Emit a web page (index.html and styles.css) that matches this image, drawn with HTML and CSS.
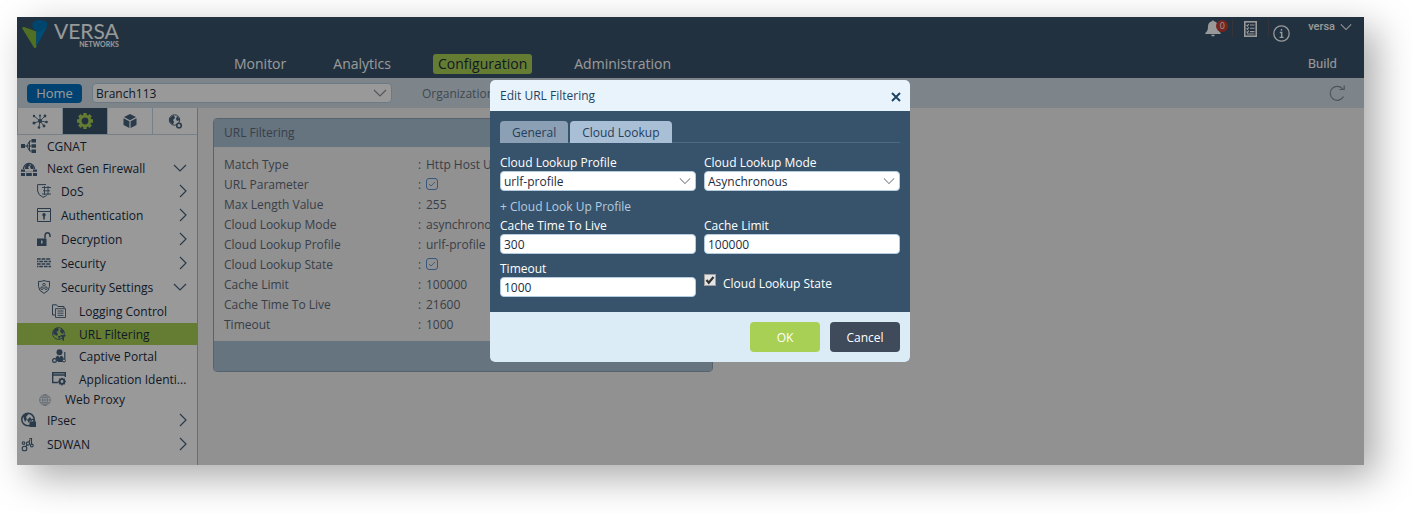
FILE: index.html
```html
<!DOCTYPE html>
<html lang="en">
<head>
  <meta charset="utf-8">
  <title>Versa Director</title>
  <link rel="stylesheet" href="styles.css">
</head>
<body>
  <svg class="symbols" width="0" height="0">
    <symbol id="down" viewBox="0 0 14 8"><path d="M1 1l6 6 6-6" fill="none" stroke="currentColor" stroke-width="1.2"/></symbol>
    <symbol id="right" viewBox="0 0 8 14"><path d="M1 1l6 6-6 6" fill="none" stroke="currentColor" stroke-width="1.2"/></symbol>
    <symbol id="ticked" viewBox="0 0 12 12"><rect x=".5" y=".5" width="11" height="11" rx="2.5" fill="none" stroke="currentColor"/><path d="M3 6l2 2 4-4" fill="none" stroke="currentColor" stroke-width=".9"/></symbol>
  </svg>

  <div class="app">
    <header class="header">
      <div class="header-top">
        <a class="logo" href="#">
          <svg width="26" height="28" viewBox="0 0 26 28">
            <path d="M.3 8.6Q-.2 6.800 2 7l12.500 4.500V27l-1.200 1h-1z" fill="#86b93a"/>
            <path d="M10.500 3.200Q12 .3 15.500.1q6-.4 8.800 1.500 1.700 1.600.7 5.100L14.500 26V11.500Q9.500 8.500 10.500 3.200z" fill="#0074b4"/>
            <path d="M25 6.700L14.500 26V11.500Q18 13 25 6.700z" fill="#0080c4"/>
          </svg>
          <span class="logo-text"><span>VERSA</span><small>NETWORKS</small></span>
        </a>
        <div class="tools">
          <button class="tool bell" aria-label="Alarms">
            <svg width="16" height="17" viewBox="0 0 16 17"><path d="M8 0l1 1.300c3 .6 4 2.700 4 5.200 0 3.500.8 5 2.700 6.500v1H.3v-1C2.200 11.500 3 10 3 6.500c0-2.500 1-4.600 4-5.200zM6 14.800h4Q9.500 16.600 8 16.600T6 14.800z" fill="currentColor"/></svg>
            <span class="badge">0</span>
          </button>
          <button class="tool tasks" aria-label="Tasks">
            <svg width="13" height="16" viewBox="0 0 13 16"><rect x=".8" y=".8" width="11.400" height="14.400" fill="none" stroke="currentColor" stroke-width="1.600"/><path d="M2.500 4l1 1 1.200-2M2.500 7.300l1 1 1.200-2M2.500 10.600l1 1 1.200-2M6 4h4.500M6 7.300h4.500M6 10.600h4.500M3 13h7.500" fill="none" stroke="currentColor" stroke-width="1.100"/></svg>
          </button>
          <button class="tool info" aria-label="About">
            <svg width="17" height="17" viewBox="0 0 17 17"><circle cx="8.500" cy="8.500" r="7.700" fill="none" stroke="currentColor" stroke-width="1.300"/><path d="M8.500 4v1.700M6.800 7.500h1.900v4.700M6.600 12.400h4" fill="none" stroke="currentColor" stroke-width="1.400"/></svg>
          </button>
          <button class="user">versa <svg width="12" height="8"><use href="#down"/></svg></button>
        </div>
      </div>
      <div class="header-nav">
        <nav class="nav">
          <a href="#">Monitor</a>
          <a href="#">Analytics</a>
          <a class="active" href="#">Configuration</a>
          <a href="#">Administration</a>
        </nav>
        <a class="build" href="#">Build</a>
      </div>
    </header>

    <div class="subbar">
      <button class="home">Home</button>
      <div class="select device">
        <select aria-label="Device"><option>Branch113</option></select>
        <svg width="14" height="8"><use href="#down"/></svg>
      </div>
      <span class="org">Organization</span>
      <button class="refresh" aria-label="Refresh">
        <svg width="17" height="16" viewBox="0 0 17 16"><path d="M14.500 11.500A7 7 0 1 1 13.800 4M10.500 4.500h4.700V.5" fill="none" stroke="currentColor" stroke-width="1.200"/></svg>
      </button>
    </div>

    <div class="content">
      <aside class="sidebar">
        <div class="side-tabs">
          <button aria-label="Networking">
            <svg width="16" height="16" viewBox="0 0 16 16"><circle cx="8" cy="8" r="2" fill="currentColor"/><path d="M8 8L2 3M8 8l5-5M8 8l6 1M8 8l4 5M8 8l-1 6M8 8l-6 2M8 8V3" stroke="currentColor" stroke-width=".9"/><g fill="currentColor"><circle cx="2" cy="3" r="1.200"/><circle cx="13" cy="3" r="1.400"/><circle cx="14.500" cy="9" r="1.300"/><circle cx="12" cy="13" r="1.400"/><circle cx="7" cy="14.500" r="1.300"/><circle cx="2" cy="10" r="1.500"/><circle cx="8" cy="2.500" r="1"/></g></svg>
          </button>
          <button class="active" aria-label="Services">
            <svg width="16" height="16" viewBox="0 0 16 16"><circle cx="8" cy="8" r="4.800" fill="none" stroke="currentColor" stroke-width="2.800"/><path d="M8 0v3M8 13v3M0 8h3M13 8h3M2.300 2.300l2 2M11.700 11.700l2 2M2.300 13.700l2-2M11.700 4.300l2-2" stroke="currentColor" stroke-width="3.400"/></svg>
          </button>
          <button aria-label="Objects">
            <svg width="14" height="15" viewBox="0 0 14 15"><path d="M7 0l6 3-6 3.200L1 3zM.5 4.200l5.900 3.100V14L.5 11zM13.500 4.200L7.600 7.300V14l5.900-3z" fill="currentColor"/></svg>
          </button>
          <button aria-label="Others">
            <svg width="15" height="15" viewBox="0 0 15 15"><circle cx="6.500" cy="6" r="5.200" fill="none" stroke="currentColor"/><path d="M2 4q2-3 4-2.500L7 4 5 6l1 2-1 2.500Q2 9 1.500 6zM9 2l3 4-3 1-1-2z" fill="currentColor"/><circle cx="11" cy="11.500" r="2.300" fill="#fff" stroke="currentColor" stroke-width="1.600"/></svg>
          </button>
        </div>
        <nav class="menu">
          <a class="level1 short" href="#"><svg width="16" height="14" viewBox="0 0 16 14"><path d="M0 5h4v4H0zM10.500 0H15v3.500h-4.500zM10.500 5.200H15v3.500h-4.500zM10.500 10.500H15V14h-4.500z" fill="currentColor"/><path d="M4 7h6.500M10.500 2H8.500v10h2M8 3L6 7l2 4" fill="none" stroke="currentColor"/></svg>CGNAT</a>
          <a class="level1 short" href="#"><svg width="16" height="16" viewBox="0 0 16 16"><path d="M2.500 9a5.500 5.500 0 1 1 11 0" fill="none" stroke="currentColor" stroke-width="1.300"/><path d="M4 8q0-4 4-4.500l1 2L7 7l1 2H4zM10 4q3 2 2.500 5H10L9 7z" fill="currentColor"/><path d="M0 9.500h4v2h8v-2h4v2.300H0zM0 13h4v3H0zM5.200 13h5.600v3H5.200zM12 13h4v3h-4z" fill="currentColor"/></svg>Next Gen Firewall<svg class="arrow" width="14" height="8"><use href="#down"/></svg></a>
          <a class="level2" href="#"><svg width="14" height="14" viewBox="0 0 14 14"><path d="M9 .6H.6V7Q1 11 6 13.300q3-1 4-2.500" fill="none" stroke="currentColor"/><path d="M5 3.500h9M6 6.800h7M5 10h9M7.500 2v9M11 2v9" stroke="currentColor" stroke-width=".9"/></svg>DoS<svg class="arrow" width="8" height="14"><use href="#right"/></svg></a>
          <a class="level2" href="#"><svg width="14" height="14" viewBox="0 0 14 14"><path d="M.5.500h13v13H.5zM.5 3.500h13" fill="none" stroke="currentColor"/><circle cx="7" cy="6.800" r="1.700" fill="currentColor"/><path d="M7 7v4.500" stroke="currentColor" stroke-width="1.600"/></svg>Authentication<svg class="arrow" width="8" height="14"><use href="#right"/></svg></a>
          <a class="level2" href="#"><svg width="14" height="14" viewBox="0 0 14 14"><path d="M0 6.500h9.500V14H0z" fill="currentColor"/><path d="M8 6.500V3.500q.3-2.700 2.500-2.700T13 3.500V5" fill="none" stroke="currentColor" stroke-width="1.500"/><path d="M4.800 8.500v3" stroke="#fff" stroke-width="1.500"/></svg>Decryption<svg class="arrow" width="8" height="14"><use href="#right"/></svg></a>
          <a class="level2" href="#"><svg width="14" height="10" viewBox="0 0 14 10"><path d="M0 1h14M0 6h14" stroke="currentColor" stroke-width="1.700" stroke-dasharray="3.700 .9"/><path d="M0 3.500h14M0 8.500h14" stroke="currentColor" stroke-width="1.700" stroke-dasharray="3.700 .9" stroke-dashoffset="2.300"/></svg>Security<svg class="arrow" width="8" height="14"><use href="#right"/></svg></a>
          <a class="level2" href="#"><svg width="14" height="14" viewBox="0 0 14 14"><path d="M7 .6q3 1.200 5.500.8v5q0 4.500-5.500 7-5.500-2.500-5.500-7v-5Q4 1.800 7 .6z" fill="none" stroke="currentColor"/><g fill="none" stroke="currentColor" stroke-width=".9"><circle cx="7" cy="4.700" r="1.300"/><circle cx="5" cy="8.200" r="1.300"/><circle cx="9" cy="8.200" r="1.300"/></g></svg>Security Settings<svg class="arrow" width="14" height="8"><use href="#down"/></svg></a>
          <a class="level3" href="#"><svg width="14" height="14" viewBox="0 0 14 14"><path d="M3 11H.5V.8h4L6 2.500h6V4.500" fill="none" stroke="currentColor"/><path d="M3.500 4.700h10v8.800h-10zM5.500 7h6M5.500 9.200h6M5.500 11.400h6" fill="none" stroke="currentColor" stroke-width=".9"/></svg>Logging Control</a>
          <a class="level3 short selected" href="#"><svg width="14" height="14" viewBox="0 0 14 14"><circle cx="6.500" cy="6.500" r="5.900" fill="none" stroke="currentColor"/><path d="M2 2.500Q4 .5 6 1l1 2-2.500 2L6 7 5 9 3 8 1 6.500zM9 1.500l3 3-1 2.500-2-1-1-2zM6 9h3l-2 3.500z" fill="currentColor"/><path d="M8 8h6l-2 2.500V14l-1.800-1v-2.500z" fill="currentColor"/></svg>URL Filtering</a>
          <a class="level3 short" href="#"><svg width="14" height="14" viewBox="0 0 14 14"><circle cx="7.500" cy="3.200" r="3" fill="currentColor"/><path d="M3.500 9Q4 7 6 6.500l1.500 2 1.500-2q2 .5 2.500 2.500v4H6z" fill="currentColor"/><circle cx="2.500" cy="11.500" r="1.900" fill="none" stroke="currentColor" stroke-width="1.200"/><path d="M4.500 11.500H8M12.800 3v7" stroke="currentColor" stroke-width="1.200"/><circle cx="12" cy="11.500" r="1.500" fill="#fff" stroke="currentColor"/></svg>Captive Portal</a>
          <a class="level3" href="#"><svg width="14" height="14" viewBox="0 0 14 14"><path d="M6.500 10.500H.7V.7h12.600V5M.7 3h12.600" fill="none" stroke="currentColor" stroke-width="1.400"/><circle cx="10" cy="9.500" r="2.300" fill="none" stroke="currentColor" stroke-width="1.800"/><path d="M10 5.700v1.500M10 12v1.500M6.200 9.500h1.500M12.400 9.500h1.500M7.300 6.800l1 1M11.700 11.200l1 1M12.700 6.800l-1 1M7.300 12.200l1-1" stroke="currentColor" stroke-width="1.400"/></svg><span>Application Identi...</span></a>
          <a class="proxy" href="#"><svg width="12" height="12" viewBox="0 0 12 12"><g fill="none" stroke="currentColor" stroke-width=".8"><circle cx="6" cy="6" r="5.400"/><ellipse cx="6" cy="6" rx="2.500" ry="5.400"/><path d="M6 .6v10.800M.6 6h10.800M1.300 3.300h9.400M1.300 8.700h9.400"/></g></svg>Web Proxy</a>
          <a class="level1" href="#"><svg width="16" height="16" viewBox="0 0 16 16"><circle cx="7" cy="7.500" r="6.200" fill="none" stroke="currentColor" stroke-width="1.500"/><path d="M2 4q3-3 6-2.500L5 5l1 2-2 3zM6 8l3-3 2 3H9l-1 3z" fill="currentColor"/><path d="M8.500 9.500H15V15H8.500z" fill="currentColor"/><path d="M10 9.500V8.300q1.700-2 3.500 0v1.200" fill="none" stroke="currentColor" stroke-width="1.200"/></svg>IPsec<svg class="arrow" width="8" height="14"><use href="#right"/></svg></a>
          <a class="level1" href="#"><svg width="16" height="16" viewBox="0 0 16 16"><g fill="none" stroke="currentColor" stroke-width="1.100"><circle cx="3.500" cy="12.500" r="2.300"/><circle cx="2.500" cy="7" r="1.300"/><circle cx="7" cy="7.500" r="1.600"/><circle cx="10.800" cy="9.500" r="1.400"/><path d="M4.700 10.500l1.500-1.600M8 6l1-2.500M8.500 2.500h2v5.600"/></g></svg>SDWAN<svg class="arrow" width="8" height="14"><use href="#right"/></svg></a>
        </nav>
      </aside>

      <main class="main">
        <section class="panel">
          <h2>URL Filtering</h2>
          <table>
            <tr><th scope="row">Match Type</th><td>:</td><td>Http Host URL</td></tr>
            <tr><th scope="row">URL Parameter</th><td>:</td><td><svg class="tick" width="12" height="12"><use href="#ticked"/></svg></td></tr>
            <tr><th scope="row">Max Length Value</th><td>:</td><td>255</td></tr>
            <tr><th scope="row">Cloud Lookup Mode</th><td>:</td><td>asynchronous</td></tr>
            <tr><th scope="row">Cloud Lookup Profile</th><td>:</td><td>urlf-profile</td></tr>
            <tr><th scope="row">Cloud Lookup State</th><td>:</td><td><svg class="tick" width="12" height="12"><use href="#ticked"/></svg></td></tr>
            <tr><th scope="row">Cache Limit</th><td>:</td><td>100000</td></tr>
            <tr><th scope="row">Cache Time To Live</th><td>:</td><td>21600</td></tr>
            <tr><th scope="row">Timeout</th><td>:</td><td>1000</td></tr>
          </table>
          <div class="panel-foot"></div>
        </section>
      </main>
    </div>

    <div class="overlay">
      <form class="dialog" role="dialog" aria-labelledby="dialog-title">
        <div class="dialog-head">
          <h2 id="dialog-title">Edit URL Filtering</h2>
          <button type="button" class="close" aria-label="Close">
            <svg width="10" height="10" viewBox="0 0 10 10"><path d="M1 1l8 8M9 1L1 9" stroke="currentColor" stroke-width="2"/></svg>
          </button>
        </div>
        <div class="dialog-body">
          <div class="tabs">
            <button type="button">General</button>
            <button type="button" class="active">Cloud Lookup</button>
          </div>
          <div class="fields">
            <div class="field">
              <label for="profile">Cloud Lookup Profile</label>
              <div class="select">
                <select id="profile"><option>urlf-profile</option></select>
                <svg width="12" height="8"><use href="#down"/></svg>
              </div>
            </div>
            <div class="field">
              <label for="mode">Cloud Lookup Mode</label>
              <div class="select">
                <select id="mode"><option>Asynchronous</option><option>Synchronous</option></select>
                <svg width="12" height="8"><use href="#down"/></svg>
              </div>
            </div>
            <a class="add" href="#">+ Cloud Look Up Profile</a>
            <div class="field">
              <label for="ttl">Cache Time To Live</label>
              <input id="ttl" type="text" value="300">
            </div>
            <div class="field">
              <label for="limit">Cache Limit</label>
              <input id="limit" type="text" value="100000">
            </div>
            <div class="field timeout">
              <label for="timeout">Timeout</label>
              <input id="timeout" type="text" value="1000">
            </div>
            <div class="check">
              <span class="box">
                <input id="state" type="checkbox" checked>
                <svg width="12" height="12" viewBox="0 0 12 12"><path d="M2.500 6l2.300 2.800L9.500 3" fill="none" stroke="#333" stroke-width="2.200"/></svg>
              </span>
              <label for="state">Cloud Lookup State</label>
            </div>
          </div>
        </div>
        <div class="dialog-foot">
          <button type="submit" class="ok">OK</button>
          <button type="button" class="cancel">Cancel</button>
        </div>
      </form>
    </div>
  </div>
</body>
</html>
```
FILE: styles.css
```css
* {
  box-sizing: border-box;
}
body {
  margin: 0;
  padding: 17px 48px 48px 17px;
  background: #fff;
  font-family: "Open Sans", "Noto Sans", sans-serif;
  font-size: 12px;
  color: #1c2c40;
}
a {
  color: inherit;
  text-decoration: none;
}
button {
  font: inherit;
  color: inherit;
  background: none;
  border: 0;
  padding: 0;
}
svg {
  display: block;
  flex: none;
}
h2 {
  margin: 0;
  font-size: 12px;
  font-weight: 400;
}
.symbols {
  position: absolute;
}
.app {
  position: relative;
  display: flex;
  flex-direction: column;
  min-height: calc(100vh - 65px);
  background: #f2f2f2;
  box-shadow: 12px 12px 36px rgba(0, 0, 0, 0.34);
}

/* header */
.header {
  background: #37536b;
  color: #fff;
  padding: 3px 12px 4px 5px;
}
.header-top {
  display: flex;
  justify-content: space-between;
  height: 34px;
}
.logo {
  display: flex;
  gap: 6px;
}
.logo-text {
  display: flex;
  flex-direction: column;
  align-items: flex-end;
  padding-top: 2px;
  font-family: Lato, sans-serif;
  font-size: 21px;
  line-height: 18px;
}
.logo-text small {
  font-size: 7px;
  font-weight: 700;
  line-height: 9px;
}
.tools {
  display: flex;
  align-items: flex-start;
}
.tool {
  padding: 0 11px;
  border-right: 1px solid #5a5560;
  height: 17px;
}
.bell {
  position: relative;
}
.badge {
  position: absolute;
  left: 22px;
  top: 0;
  width: 12px;
  height: 12px;
  border-radius: 6px;
  background: #c83c32;
  font-size: 9px;
  line-height: 12px;
  text-align: center;
}
.info {
  border: 0;
  height: 22px;
  padding: 5px 18px 0 4px;
}
.user {
  display: flex;
  align-items: center;
  gap: 5px;
  font-family: Roboto, sans-serif;
  font-size: 11px;
  font-weight: 500;
  line-height: 14px;
}
.header-nav {
  display: flex;
  justify-content: space-between;
  line-height: 20px;
}
.nav {
  display: flex;
  gap: 37px;
  margin-left: 207px;
  font-size: 14px;
}
.nav a {
  padding: 0 5px;
  border-radius: 3px;
}
.nav .active {
  background: #a8d054;
  color: #1c2c40;
}
.build {
  width: 44px;
  font-family: Roboto, sans-serif;
  font-size: 13px;
}

/* device bar */
.subbar {
  display: flex;
  align-items: center;
  height: 30px;
  padding: 0 18px 0 10px;
  background: #d0dee8;
}
.home {
  width: 55px;
  height: 19px;
  margin-right: 10px;
  border-radius: 4px;
  background: #006fbe;
  color: #fff;
  font-size: 13px;
  line-height: 18px;
}
.select {
  display: grid;
  align-items: center;
}
.select > * {
  grid-area: 1 / 1;
}
.select svg {
  justify-self: end;
  margin-right: 5px;
  color: #8a9096;
  pointer-events: none;
}
select,
input[type="text"] {
  appearance: none;
  width: 100%;
  height: 20px;
  margin: 0;
  padding: 0 3px;
  border: 1px solid #b4cce0;
  border-radius: 4px;
  background: #fff;
  color: #1c2c40;
  font: inherit;
}
.device {
  width: 300px;
}
.org {
  margin-left: 30px;
  color: #6b7886;
}
.refresh {
  margin-left: auto;
  color: #808a94;
}

/* sidebar */
.content {
  display: flex;
  flex: 1;
}
.sidebar {
  width: 181px;
  flex: none;
  border-right: 1px solid #b4b9be;
  background: #fff;
}
.side-tabs {
  display: flex;
  height: 27px;
  border-bottom: 1px solid #c4d6e4;
  color: #45627c;
}
.side-tabs button {
  display: flex;
  flex: 1;
  align-items: center;
  justify-content: center;
  border-left: 1px solid #c4d6e4;
}
.side-tabs .active {
  background: #37536b;
  color: #a8d054;
}
.menu a {
  display: flex;
  align-items: center;
  gap: 10px;
  height: 24px;
  padding-right: 10px;
  white-space: nowrap;
}
.menu svg {
  color: #45627c;
}
.menu .arrow {
  margin-left: auto;
}
.menu .level1 {
  padding-left: 4px;
}
.menu .level2 {
  padding-left: 20px;
}
.menu .level3 {
  gap: 13px;
  padding-left: 35px;
}
.menu .short {
  height: 22px;
}
.menu .selected {
  background: #a8d054;
}
.menu .proxy {
  gap: 14px;
  height: 17px;
  padding-left: 22px;
}
.proxy svg {
  opacity: 0.5;
}

/* settings panel */
.main {
  flex: 1;
  padding: 10px 15px;
}
.panel {
  width: 500px;
  border: 1px solid #8fa6ba;
  border-radius: 4px;
  background: #f2f2f2;
  color: #5e6a78;
  overflow: hidden;
}
.panel h2 {
  padding-left: 10px;
  background: #aac1d4;
  line-height: 28px;
}
.panel table {
  margin: 7px 0 7px 10px;
  border-collapse: collapse;
}
.panel th {
  width: 194px;
  font-weight: 400;
  text-align: left;
}
.panel td,
.panel th {
  height: 20px;
  padding: 0;
}
.panel td:nth-child(2) {
  width: 8px;
}
.tick {
  color: #5b92d0;
}
.panel-foot {
  height: 30px;
  background: #aac1d4;
}

/* dialog */
.overlay {
  position: absolute;
  inset: 0;
  display: flex;
  align-items: flex-start;
  justify-content: center;
  padding: 63px 0 0 19px;
  background: rgba(0, 0, 0, 0.4);
}
.dialog {
  width: 420px;
  border-radius: 5px;
  background: #37536b;
  overflow: hidden;
}
.dialog-head {
  display: flex;
  align-items: center;
  justify-content: space-between;
  height: 31px;
  padding: 0 9px 0 10px;
  background: #e9f3fc;
  color: #1f4462;
}
.close {
  padding-top: 3px;
}
.dialog-body {
  padding: 10px 10px 15px;
  color: #fff;
}
.tabs {
  display: flex;
  gap: 2px;
  margin-bottom: 10px;
  border-bottom: 1px solid #4b6a84;
}
.tabs button {
  height: 22px;
  margin-bottom: -1px;
  padding: 0 12px;
  border-radius: 4px 4px 0 0;
  background: #8b9fb5;
  color: #24405a;
}
.tabs .active {
  background: #a9bfd6;
}
.fields {
  display: grid;
  grid-template-columns: 1fr 1fr;
  column-gap: 8px;
}
.fields label {
  display: block;
  padding-top: 2px;
  line-height: 16px;
}
.add {
  grid-column: 1 / -1;
  padding-top: 6px;
  color: #b4cce0;
  line-height: 19px;
}
.timeout {
  margin-top: 5px;
}
.check {
  display: flex;
  gap: 7px;
  padding-top: 20px;
}
.box {
  display: grid;
  align-self: flex-start;
}
.box > * {
  grid-area: 1 / 1;
}
.box svg {
  pointer-events: none;
}
.box input {
  appearance: none;
  width: 12px;
  height: 12px;
  margin: 0;
  border: 1px solid #a0a0a0;
  background: #e4e4e4;
}
.dialog-foot {
  display: flex;
  justify-content: flex-end;
  gap: 10px;
  padding: 10px;
  background: #dcecf7;
}
.dialog-foot button {
  width: 70px;
  height: 30px;
  border-radius: 4px;
  color: #fff;
}
.dialog-foot .ok {
  background: #a8d054;
}
.dialog-foot .cancel {
  background: #3f4a5b;
}
```
